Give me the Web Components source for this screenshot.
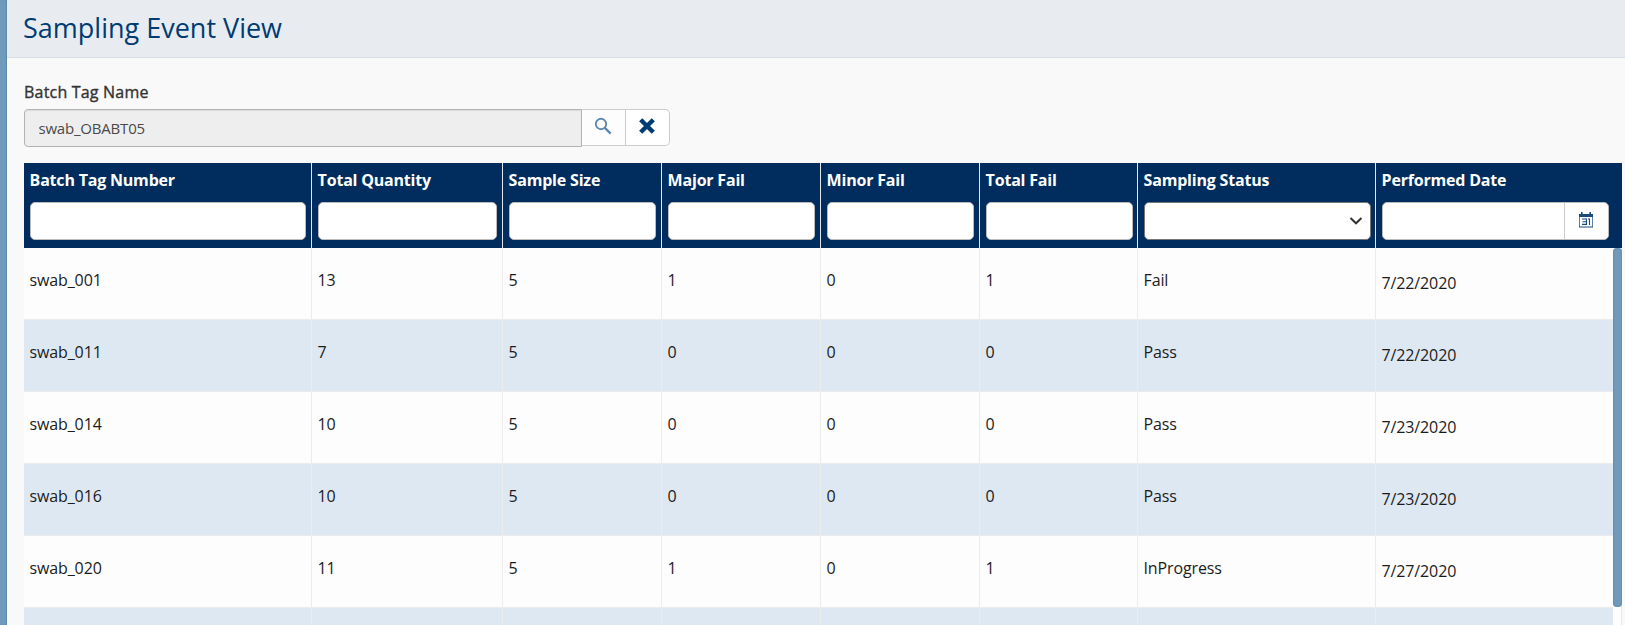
<!DOCTYPE html>
<html lang="en"><head><meta charset="utf-8"><title>Sampling Event View</title>
<style>html,body{margin:0;height:100%;overflow:hidden}body{font-family:"Open Sans","Noto Sans",sans-serif;background:#f9f9f9}</style></head>
<body><sampling-page></sampling-page>
<script>
const define=(name,html,setup)=>customElements.define(name,class extends HTMLElement{
  constructor(){super();this.attachShadow({mode:'open'}).innerHTML=html;}
  connectedCallback(){if(setup)setup.call(this,this.shadowRoot);}
});

define('page-header',`<style>
:host{display:block;box-sizing:border-box;height:58px;background:#e8ecf1;border-bottom:1px solid #d8dee5;padding:0 16px}
h1{margin:0;font-size:27px;line-height:55px;font-weight:400;color:#003c71}
</style><h1><slot></slot></h1>`);

define('tag-lookup',`<style>
:host{display:block;padding:23px 0 0 17px}
label{display:block;font-size:16px;line-height:22px;letter-spacing:.2px;-webkit-text-stroke:.35px #333;color:#333;margin-bottom:6px}
.row{display:flex;align-items:flex-start}
.value{box-sizing:border-box;width:558px;height:38px;border:1px solid #b3b3b3;border-radius:4px 0 0 4px;background:#eee;box-shadow:inset 0 1px 1px rgba(0,0,0,.08);padding-left:13.5px;font-size:15px;letter-spacing:-.2px;line-height:37px;color:#4a4a4a}
.btn{box-sizing:border-box;height:37px;border:1px solid #ccc;border-left:0;background:#fff;display:flex;align-items:center;justify-content:center}
.find{width:44px;background:#fdfdfd}.clear{width:44px;border-radius:0 5px 5px 0}
svg{display:block;margin:-3px 0 0 -1px}
</style><label><slot name="label"></slot></label><div class="row"><div class="value"><slot></slot></div>
<div class="btn find"><svg width="18" height="18" viewBox="0 0 18 18" fill="none" stroke="#5e88b0"><circle cx="7" cy="7" r="5.2" stroke-width="1.9"/><path d="M10.6 10.6L16.6 16.6" stroke-width="2.3"/></svg></div>
<div class="btn clear"><svg width="18" height="18" viewBox="0 0 18 18"><path d="M2.7 2.7L15.3 15.3M15.3 2.7L2.7 15.3" stroke="#003c71" stroke-width="4.4"/></svg></div></div>`);

define('column-filter',`<style>
:host{display:block;box-sizing:border-box;padding:6px 5px 0 6px;border-right:1px solid #e4e7ec;color:#fff}
:host(.wide){padding-right:4px}
:host([kind=date]){border-right:0;padding-right:13px}
.name{font-size:16px;letter-spacing:-.2px;font-weight:700;line-height:22px;margin:0 0 11px -.4px;white-space:nowrap}
.box{box-sizing:border-box;height:38px;border:1px solid #bbb;border-radius:5px;background:#fff;display:flex;justify-content:flex-end;align-items:center}
svg{display:none}
:host([kind=select]) .box{border-color:#777;padding-right:7px}
:host([kind=select]) .chev{display:block}
.cal{display:none;width:44px;height:100%;border-left:1px solid #ccc;box-sizing:border-box;align-items:center;justify-content:center}
:host([kind=date]) .cal{display:flex}.cal svg{display:block;margin:-2px 0 0 -1px}
</style><div class="name"><slot></slot></div><div class="box">
<svg class="chev" width="14" height="10" viewBox="0 0 14 10"><path d="M1.5 2L7 7.3L12.5 2" fill="none" stroke="#333" stroke-width="2"/></svg>
<div class="cal"><svg width="16" height="18" viewBox="0 0 16 18"><path d="M1 3H15V6H1ZM3 1H4.6V3H3ZM11.4 1H13V3H11.4Z" fill="#174b7d"/><path d="M1.5 6V16M14.5 6V16" fill="none" stroke="#5c82a8"/><path d="M1 16H15M4 8H8.5V13.4H4M4.5 10.7H8.5M10 8H11.5V14" fill="none" stroke="#174b7d" stroke-width="1.1"/></svg></div></div>`);

define('grid-cell',`<style>
:host{display:block;box-sizing:border-box;padding:20px 0 0 5.5px;font-size:16px;letter-spacing:-.12px;line-height:24px;color:#1c1c1c;border-right:1px solid #ececec}
:host([last]){border-right:0;padding-top:23px}
</style><slot></slot>`);

define('grid-row',`<style>
:host{display:grid;grid-template-columns:var(--cols);box-sizing:border-box;height:72px;background:#fdfdfd;border-bottom:1px solid #ececec}
:host([alt]){background:#dee8f2}
</style><slot></slot>`);

define('sample-grid',`<style>
:host{--cols:288px 191px 159px 159px 159px 158px 238px 1fr;display:block;width:1598px;margin:16px 0 0 17px}
.head{display:grid;grid-template-columns:var(--cols);height:85px;background:#002d5d}
.body{display:flex;height:377px;overflow:hidden}
.rows{flex:1}
.track{width:9px;box-sizing:border-box;background:#fdfdfd;border-right:1px solid #e8e8e8}
.thumb{width:9px;height:359px;border-radius:4px;background:#6f9abc;box-shadow:inset 0 0 2px #527c9f}
</style><div class="head"></div><div class="body"><div class="rows"></div><div class="track"><div class="thumb"></div></div></div>`,function(root){
  const cols=[['Batch Tag Number'],['Total Quantity'],['Sample Size'],['Major Fail'],['Minor Fail'],['Total Fail'],['Sampling Status','select'],['Performed Date','date']];
  root.querySelector('.head').innerHTML=cols.map(([n,k],i)=>`<column-filter kind="${k||'text'}" class="${i===5||i===6?'wide':''}">${n}</column-filter>`).join('');
  const data=[['swab_001',13,5,1,0,1,'Fail','7/22/2020'],['swab_011',7,5,0,0,0,'Pass','7/22/2020'],['swab_014',10,5,0,0,0,'Pass','7/23/2020'],['swab_016',10,5,0,0,0,'Pass','7/23/2020'],['swab_020',11,5,1,0,1,'InProgress','7/27/2020'],Array(8).fill('')];
  root.querySelector('.rows').innerHTML=data.map((r,i)=>`<grid-row ${i%2?'alt':''}>${r.map((v,j)=>`<grid-cell ${j===7?'last':''}>${v}</grid-cell>`).join('')}</grid-row>`).join('');
});

define('sampling-page',`<style>
:host{display:flex;width:1625px;height:625px;overflow:hidden}
aside{width:7px;background:#6f9abc;box-shadow:inset -1px 0 1px #5f88aa}
main{flex:1;min-width:0}
</style><aside></aside><main><page-header>Sampling Event View</page-header>
<tag-lookup><span slot="label">Batch Tag Name</span>swab_OBABT05</tag-lookup><sample-grid></sample-grid></main>`);
</script></body></html>
